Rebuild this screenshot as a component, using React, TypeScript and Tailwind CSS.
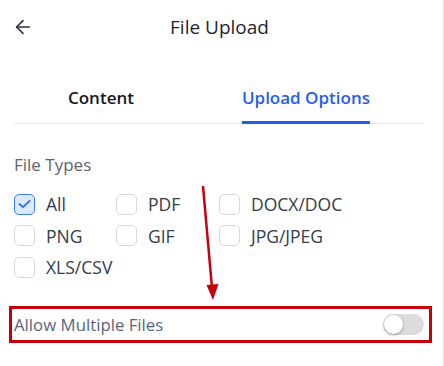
import { ArrowLeft } from 'lucide-react'

const fileTypes = [
  { label: 'All', checked: true },
  { label: 'PDF', checked: false },
  { label: 'DOCX/DOC', checked: false },
  { label: 'PNG', checked: false },
  { label: 'GIF', checked: false },
  { label: 'JPG/JPEG', checked: false },
  { label: 'XLS/CSV', checked: false },
]

function Checkbox({ checked }: { checked: boolean }) {
  if (checked) {
    return (
      <span className="flex h-[21px] w-[21px] shrink-0 items-center justify-center rounded-[5px] border border-[#3b7ff2] bg-[#dce8fe]">
        <svg width="13" height="10" viewBox="0 0 13 10" fill="none">
          <polyline points="1.5,5 5,8.2 11.5,1.8" stroke="#2f6fe4" strokeWidth="1.8" strokeLinecap="round" strokeLinejoin="round" />
        </svg>
      </span>
    )
  }
  return <span className="h-[21px] w-[21px] shrink-0 rounded-[5px] border border-[#d6d9df] bg-white" />
}

export default function App() {
  return (
    <div className="relative h-[366px] w-[444px] overflow-hidden bg-white font-['Open_Sans',sans-serif]">
      <div className="h-full w-[444px] border-r border-[#e4e4e4]">
        {/* ── Header ───────────────────────────────────────────── */}
        <div className="grid h-[54px] grid-cols-[44px_1fr_44px] items-center">
          <div className="pl-[12px] text-[#2b3140]">
            <ArrowLeft size={22} strokeWidth={1.7} />
          </div>
          <h1 className="pr-[4px] text-center text-[19px] leading-6 text-[#1f2430]">File Upload</h1>
          <div />
        </div>

        {/* ── Tabs ─────────────────────────────────────────────── */}
        <div className="mx-[14px] mt-[32px] flex w-[410px] justify-around border-b border-[#e8e9ec]">
          <div className="-mb-px border-b-[3px] border-transparent pb-[11px] text-[17px] font-semibold leading-6 text-[#15181f]">
            Content
          </div>
          <div className="-mb-px border-b-[3px] border-[#1f5fea] pb-[11px] text-[17px] font-semibold leading-6 text-[#1f5fea]">
            Upload Options
          </div>
        </div>

        {/* ── File types ───────────────────────────────────────── */}
        <div className="pl-[14px]">
          <div className="mt-[29px] text-[17px] font-medium leading-6 text-[#5d626c]">File Types</div>
          <div className="mt-[16px] grid grid-cols-[102px_103px_1fr] gap-y-[9.5px]">
            {fileTypes.map((t) => (
              <label key={t.label} className="flex h-[22px] items-center gap-[11px]">
                <Checkbox checked={t.checked} />
                <span className="text-[17.5px] leading-6 text-[#323c4e]">{t.label}</span>
              </label>
            ))}
          </div>
        </div>

        {/* ── Allow multiple (highlighted) ─────────────────────── */}
        <div className="ml-[9px] mt-[28px] flex h-[37px] w-[423px] items-center justify-between border-[3px] border-[#c5000b] pl-[2px] pr-[5px]">
          <span className="text-[16.8px] leading-6 text-[#5a6579]">Allow Multiple Files</span>
          <span className="flex h-[21px] w-[41px] items-center rounded-full bg-[#dcdcdc] px-[1px]">
            <span className="h-[19px] w-[19px] rounded-full bg-white shadow-[0_1px_3px_rgba(0,0,0,0.35)]" />
          </span>
        </div>
      </div>

      {/* ── Annotation arrow ─────────────────────────────────── */}
      <svg className="pointer-events-none absolute left-0 top-0" width="444" height="366" viewBox="0 0 444 366">
        <line x1="203" y1="186" x2="212" y2="288" stroke="#c5000b" strokeWidth="2.5" />
        <polygon points="206.5,285 218.5,284 213,300" fill="#c5000b" />
      </svg>
    </div>
  )
}
